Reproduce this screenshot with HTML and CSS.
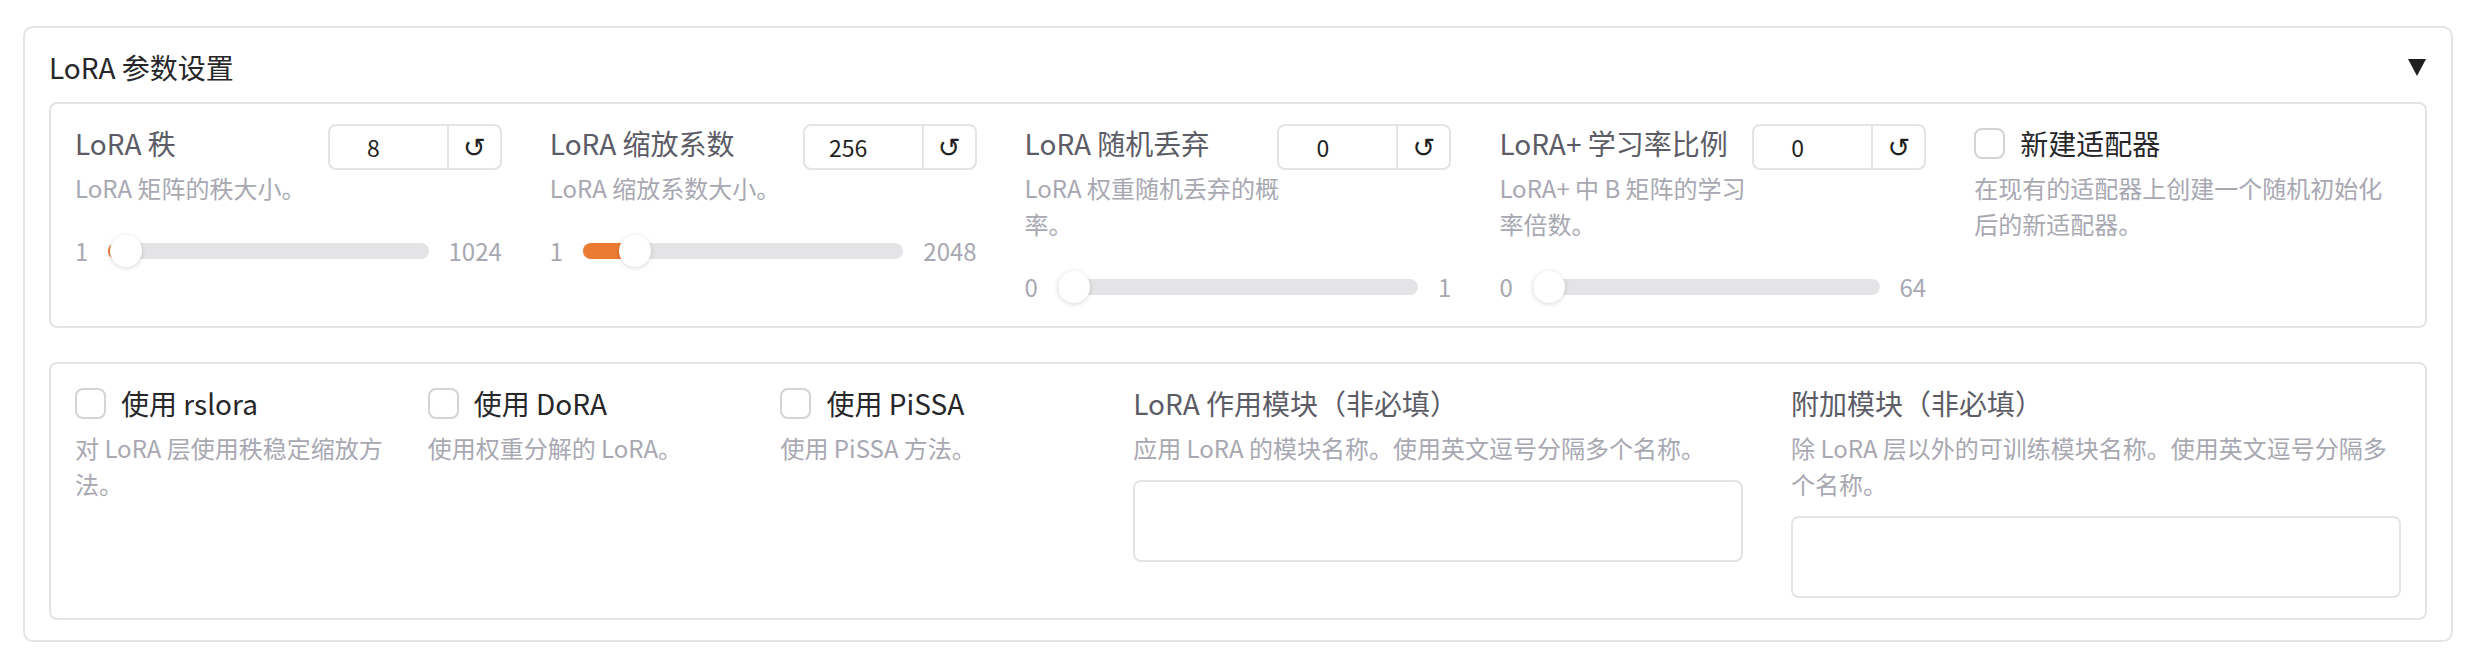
FILE: index.html
```html
<!DOCTYPE html>
<html lang="zh">
<head>
<meta charset="utf-8">
<title>LoRA 参数设置</title>
<link rel="stylesheet" href="styles.css">
</head>
<body>
<div class="page">
  <section class="accordion">
    <div class="acc-head">
      <span class="acc-title">LoRA 参数设置</span>
      <svg class="acc-arrow" width="18" height="18" viewBox="0 0 18 18"><polygon points="0,1 18,1 9,18" fill="#1f1f22"/></svg>
    </div>

    <div class="panel panel-sliders">
      <div class="cell">
        <div class="head">
          <div class="labels">
            <div class="label">LoRA 秩</div>
            <div class="info">LoRA 矩阵的秩大小。</div>
          </div>
          <div class="num"><div class="num-val">8</div><div class="num-reset">↺</div></div>
        </div>
        <div class="slider">
          <span class="lim">1</span>
          <div class="track" style="--p:0.00684"><div class="fill"></div><div class="thumb"></div></div>
          <span class="lim">1024</span>
        </div>
      </div>

      <div class="cell">
        <div class="head">
          <div class="labels">
            <div class="label">LoRA 缩放系数</div>
            <div class="info">LoRA 缩放系数大小。</div>
          </div>
          <div class="num"><div class="num-val">256</div><div class="num-reset">↺</div></div>
        </div>
        <div class="slider">
          <span class="lim">1</span>
          <div class="track" style="--p:0.12457"><div class="fill"></div><div class="thumb"></div></div>
          <span class="lim">2048</span>
        </div>
      </div>

      <div class="cell">
        <div class="head">
          <div class="labels">
            <div class="label">LoRA 随机丢弃</div>
            <div class="info">LoRA 权重随机丢弃的概率。</div>
          </div>
          <div class="num"><div class="num-val">0</div><div class="num-reset">↺</div></div>
        </div>
        <div class="slider">
          <span class="lim">0</span>
          <div class="track" style="--p:0"><div class="fill"></div><div class="thumb"></div></div>
          <span class="lim">1</span>
        </div>
      </div>

      <div class="cell">
        <div class="head">
          <div class="labels">
            <div class="label">LoRA+ 学习率比例</div>
            <div class="info">LoRA+ 中 B 矩阵的学习率倍数。</div>
          </div>
          <div class="num"><div class="num-val">0</div><div class="num-reset">↺</div></div>
        </div>
        <div class="slider">
          <span class="lim">0</span>
          <div class="track" style="--p:0"><div class="fill"></div><div class="thumb"></div></div>
          <span class="lim">64</span>
        </div>
      </div>

      <div class="cell">
        <div class="check-row"><span class="box"></span><span class="check-label">新建适配器</span></div>
        <div class="info">在现有的适配器上创建一个随机初始化后的新适配器。</div>
      </div>
    </div>

    <div class="panel panel-options">
      <div class="cell check-cell">
        <div class="check-row"><span class="box"></span><span class="check-label">使用 rslora</span></div>
        <div class="info">对 LoRA 层使用秩稳定缩放方法。</div>
      </div>
      <div class="cell check-cell">
        <div class="check-row"><span class="box"></span><span class="check-label">使用 DoRA</span></div>
        <div class="info">使用权重分解的 LoRA。</div>
      </div>
      <div class="cell check-cell">
        <div class="check-row"><span class="box"></span><span class="check-label">使用 PiSSA</span></div>
        <div class="info">使用 PiSSA 方法。</div>
      </div>
      <div class="cell">
        <div class="label">LoRA 作用模块（非必填）</div>
        <div class="info">应用 LoRA 的模块名称。使用英文逗号分隔多个名称。</div>
        <textarea class="text"></textarea>
      </div>
      <div class="cell">
        <div class="label">附加模块（非必填）</div>
        <div class="info">除 LoRA 层以外的可训练模块名称。使用英文逗号分隔多<br>个名称。</div>
        <textarea class="text"></textarea>
      </div>
    </div>
  </section>
</div>
</body>
</html>
```

FILE: styles.css
```css
* { box-sizing: border-box; }

body {
  margin: 0;
  background: #ffffff;
  font-family: "Noto Sans CJK SC", "Noto Sans", sans-serif;
  color: #27272a;
}

.page {
  padding: 26px 23px 16px 23px;
}

.accordion {
  border: 2px solid #e4e4e7;
  border-radius: 10px;
  padding: 20px 24px 20px 24px;
  background: #fff;
}

.acc-head {
  display: flex;
  justify-content: space-between;
  align-items: center;
  margin-bottom: 16px;
}

.acc-title {
  font-size: 28px;
  line-height: 38px;
  color: #27272a;
}

.acc-arrow {
  display: block;
  margin-right: 1px;
}

.panel {
  border: 2px solid #e4e4e7;
  border-radius: 8px;
  display: grid;
}

.panel-sliders {
  grid-template-columns: repeat(5, 1fr);
  padding: 20px 0 23px 0;
}

.panel-options {
  grid-template-columns: 1fr 1fr 1fr 1.865fr 1.865fr;
  padding: 20px 0 20px 0;
  margin-top: 34px;
}

.cell {
  padding: 0 24px;
  min-width: 0;
}

.head {
  display: flex;
  align-items: flex-start;
}

.labels {
  flex: 1;
  min-width: 0;
  margin-right: -12px;
}

.label {
  font-size: 28px;
  line-height: 38px;
  color: #5c5c66;
  margin-bottom: 8px;
  white-space: nowrap;
}

.info {
  font-size: 24px;
  line-height: 36px;
  color: #a8a8b2;
}

.check-cell .info {
  margin-right: -10px;
}

.num {
  flex: none;
  width: 174px;
  height: 46px;
  display: flex;
  border: 2px solid #e4e4e7;
  border-radius: 8px;
  background: #fff;
  position: relative;
}

.num-val {
  flex: 1;
  display: flex;
  align-items: center;
  justify-content: center;
  padding-right: 30px;
  font-size: 23px;
  color: #1f1f22;
}

.num-reset {
  width: 53px;
  flex: none;
  border-left: 2px solid #e4e4e7;
  display: flex;
  align-items: center;
  justify-content: center;
  font-family: "DejaVu Sans", sans-serif;
  font-size: 27px;
  line-height: 1;
  color: #1f1f22;
}

.slider {
  display: flex;
  align-items: center;
  gap: 20px;
  height: 32px;
  margin-top: 29px;
}

.lim {
  font-size: 24px;
  color: #a8a8b2;
  line-height: 32px;
}

.track {
  flex: 1;
  position: relative;
  height: 16px;
  border-radius: 8px;
  background: #e4e4e7;
}

.fill {
  position: absolute;
  left: 0;
  top: 0;
  bottom: 0;
  width: calc(16px + var(--p) * (100% - 32px));
  border-radius: 8px;
  background: #eb7b33;
}

.thumb {
  position: absolute;
  top: -8px;
  left: calc(var(--p) * (100% - 32px));
  width: 32px;
  height: 32px;
  border-radius: 50%;
  background: #ffffff;
  box-shadow: 0 1px 5px rgba(0, 0, 0, 0.16);
}

.check-row {
  display: flex;
  align-items: center;
  gap: 15px;
  margin-bottom: 8px;
}

.box {
  width: 31px;
  height: 31px;
  flex: none;
  border: 2px solid #d4d4d8;
  border-radius: 8px;
  background: #fff;
}

.check-label {
  font-size: 28px;
  line-height: 38px;
  color: #27272a;
  white-space: nowrap;
}

.text {
  display: block;
  width: 100%;
  height: 82px;
  margin-top: 14px;
  border: 2px solid #e4e4e7;
  border-radius: 8px;
  background: #fff;
  resize: none;
  font-family: inherit;
  font-size: 24px;
  outline: none;
}
```
